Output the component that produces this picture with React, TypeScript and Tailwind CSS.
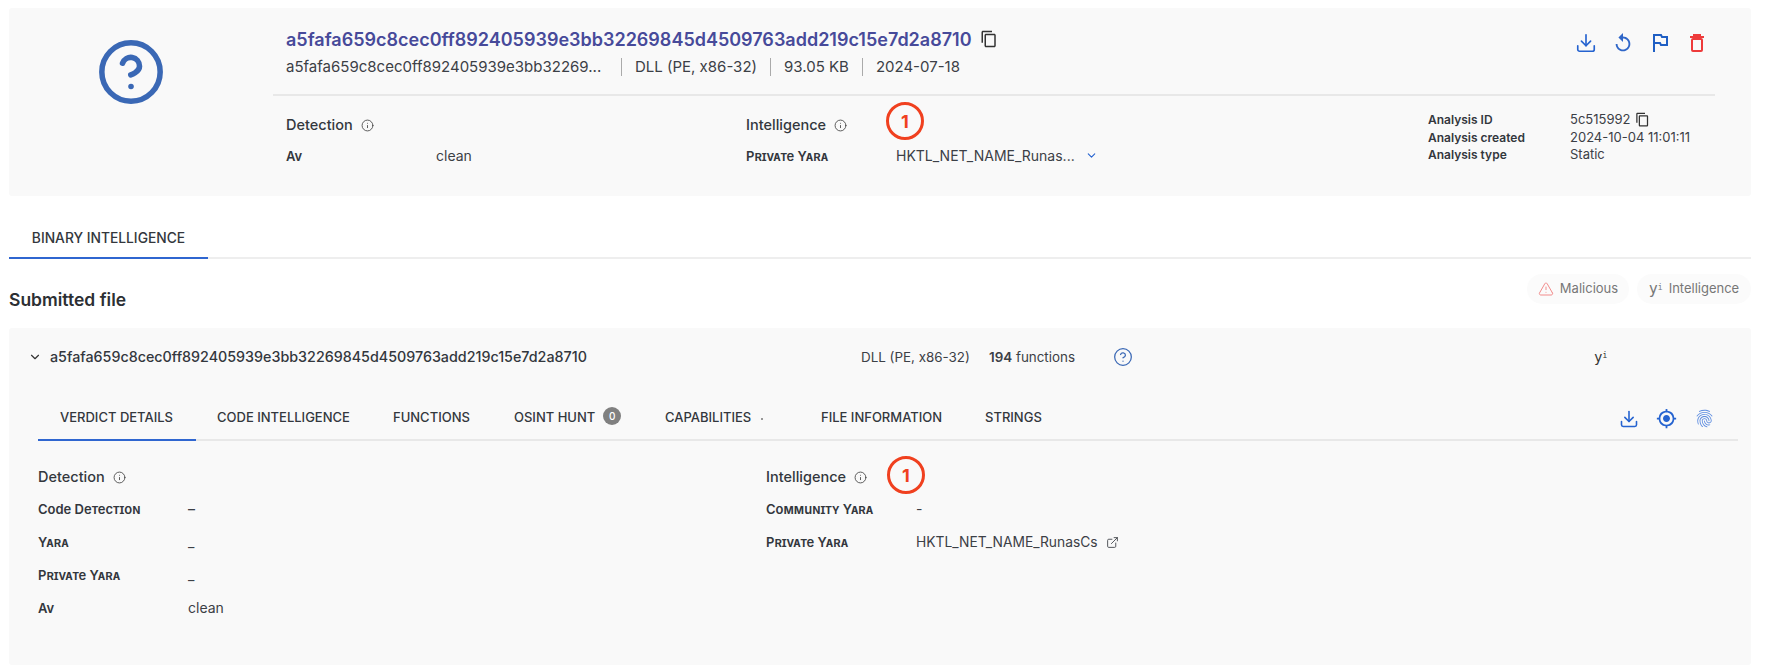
import { ChevronDown, CircleHelp, Download, ExternalLink, Info, TriangleAlert } from 'lucide-react';
import { MdFingerprint, MdGpsFixed, MdOutlineContentCopy, MdReplay } from 'react-icons/md';

const HASH = 'a5fafa659c8cec0ff892405939e3bb32269845d4509763add219c15e7d2a8710';

const TABS = [
  { label: 'VERDICT DETAILS', width: 'w-[158px]', active: true },
  { label: 'CODE INTELLIGENCE', width: 'w-[176px]' },
  { label: 'FUNCTIONS', width: 'w-[121px]' },
  { label: 'OSINT HUNT', width: 'w-[151px]', badge: '0' },
  { label: 'CAPABILITIES', width: 'w-[156px]', dot: true },
  { label: 'FILE INFORMATION', width: 'w-[164px]' },
  { label: 'STRINGS', width: 'w-[100px]' },
];

function Annotation() {
  return (
    <div className="absolute top-[-24px] flex h-[38px] w-[38px] items-center justify-center rounded-full border-[3px] border-[#f0401f] bg-transparent text-[18px] font-bold text-[#f0401f]">
      1
    </div>
  );
}

function Heading({ title, annotated, annotationClass }: { title: string; annotated?: boolean; annotationClass?: string }) {
  return (
    <div className="relative flex h-[20px] items-center gap-[8px] text-[14.5px] font-medium text-[#33373d]">
      {title}
      <Info size={13} strokeWidth={1.6} className="text-[#444]" />
      {annotated && <div className={annotationClass}><Annotation /></div>}
    </div>
  );
}

function Label({ children, className }: { children: string; className: string }) {
  return (
    <div className={`text-[13px] leading-[16px] font-semibold text-[#33373d] [font-variant-caps:small-caps] ${className}`}>
      {children}
    </div>
  );
}

function FlagIcon() {
  return (
    <svg width="22" height="22" viewBox="0 0 22 22" fill="none" stroke="#1f5fc4" strokeWidth="2">
      <path d="M5 20V3h7l1 2h5v8h-6l-1-2H5" />
    </svg>
  );
}

function TrashIcon() {
  return (
    <svg width="22" height="22" viewBox="0 0 22 22" fill="none" stroke="#ee3b3b" strokeWidth="2">
      <path d="M4 5h14M8 4.500V3h6v1.500" />
      <rect x="6" y="7" width="10" height="12" rx="1" />
    </svg>
  );
}

function YiMark({ className }: { className: string }) {
  return (
    <span className={`font-['DejaVu_Sans_Mono',monospace] leading-none ${className}`}>
      y<sup className="text-[8px]">i</sup>
    </span>
  );
}

export default function App() {
  return (
    <div className="h-[672px] w-[1768px] overflow-hidden bg-white pt-[8px] pr-[17px] pl-[9px] font-['Inter',sans-serif] text-[#33373d]">
      {/* file summary */}
      <div className="flex h-[188px] rounded-[3px] bg-[#f9f9f9]">
        <div className="flex h-[128px] w-[244px] shrink-0 items-center justify-center">
          <CircleHelp size={70} strokeWidth={1.9} className="text-[#3a68b5]" />
        </div>
        <div className="mr-[36px] ml-[20px] flex-1">
          <div className="flex h-[88px] justify-between border-b-[2px] border-[#e8e8e8] pl-[13px]">
            <div className="pt-[20px]">
              <div className="flex h-[22px] items-center gap-[8px]">
                <span className="text-[18px] font-semibold whitespace-nowrap text-[#474a9a]">{HASH}</span>
                <MdOutlineContentCopy size={18} className="text-[#333]" />
              </div>
              <div className="mt-[7px] flex h-[20px] items-center text-[15px] text-[#3c4046]">
                <span className="w-[335px] whitespace-nowrap">a5fafa659c8cec0ff892405939e3bb32269...</span>
                <span className="mr-[13px] h-[18px] w-px bg-[#aaa]" />
                <span>DLL (PE, x86-32)</span>
                <span className="mx-[13px] h-[18px] w-px bg-[#aaa]" />
                <span>93.05 KB</span>
                <span className="mx-[13px] h-[18px] w-px bg-[#aaa]" />
                <span>2024-07-18</span>
              </div>
            </div>
            <div className="mt-[24px] mr-[7px] flex h-[22px] items-start gap-[15px] text-[#2563d0]">
              <Download size={22} strokeWidth={1.8} />
              <MdReplay size={22} className="text-[#2f66c8]" />
              <FlagIcon />
              <TrashIcon />
            </div>
          </div>
          <div className="flex pl-[13px]">
            <div className="w-[460px] pt-[19px]">
              <Heading title="Detection" />
              <div className="mt-[10px] flex items-center">
                <Label className="w-[150px]">Av</Label>
                <span className="text-[14px] text-[#3c4046]">clean</span>
              </div>
            </div>
            <div className="w-[682px] pt-[19px]">
              <Heading title="Intelligence" annotated annotationClass="absolute top-[11px] left-[140px]" />
              <div className="mt-[10px] flex items-center">
                <Label className="w-[150px]">Private Yara</Label>
                <span className="text-[14px] text-[#3c4046]">HKTL_NET_NAME_Runas...</span>
                <ChevronDown size={13} strokeWidth={2} className="ml-[10px] text-[#2563d0]" />
              </div>
            </div>
            <div className="grid h-fit grid-cols-[142px_1fr] pt-[15px] text-[13px] leading-[17.500px]">
              <span className="text-[12px] font-semibold">Analysis ID</span>
              <span className="flex items-center gap-[5px] text-[#3c4046]">
                5c515992
                <MdOutlineContentCopy size={15} className="text-[#333]" />
              </span>
              <span className="text-[12px] font-semibold">Analysis created</span>
              <span className="whitespace-nowrap text-[#3c4046]">2024-10-04 11:01:11</span>
              <span className="text-[12px] font-semibold">Analysis type</span>
              <span className="text-[#3c4046]">Static</span>
            </div>
          </div>
        </div>
      </div>

      {/* page tabs */}
      <div className="mt-[30px] flex h-[33px] border-b-[2px] border-[#eeeeee]">
        <div className="-mb-[2px] flex h-[33px] w-[199px] justify-center border-b-[2px] border-[#2f66d0] pt-[2px] text-[13.800px] font-medium">
          BINARY INTELLIGENCE
        </div>
      </div>

      {/* section heading */}
      <div className="flex h-[69px] justify-between">
        <h2 className="mt-[31px] text-[17.500px] leading-[20px] font-semibold text-[#2c2f33]">Submitted file</h2>
        <div className="mt-[15px] flex h-[30px] gap-[8px] text-[13px] text-[#777]">
          <div className="flex w-[102px] items-center justify-center gap-[6px] rounded-full bg-[#fbfbfb]">
            <TriangleAlert size={16} strokeWidth={1.5} className="text-[#f28b8b]" />
            Malicious
          </div>
          <div className="flex w-[114px] items-center justify-center gap-[6px] rounded-full bg-[#fbfbfb]">
            <YiMark className="text-[15px] text-[#777]" />
            Intelligence
          </div>
        </div>
      </div>

      {/* file card */}
      <div className="h-[337px] rounded-[3px] bg-[#f9f9f9] pr-[13px] pl-[29px]">
        <div className="flex h-[58px] items-center text-[13.400px]">
          <ChevronDown size={14} strokeWidth={2} className="-ml-[10px] text-[#333]" />
          <span className="ml-[8px] w-[811px] text-[14.300px] font-medium whitespace-nowrap">{HASH}</span>
          <span className="w-[128px] text-[#3c4046]">DLL (PE, x86-32)</span>
          <span className="w-[124px] text-[#3c4046]">
            <b className="font-semibold">194</b> functions
          </span>
          <CircleHelp size={20} strokeWidth={1.5} className="text-[#3a68b5]" />
          <YiMark className="ml-[461px] text-[14px] text-[#333]" />
        </div>
        <div className="mt-[12px] flex h-[43px] items-start justify-between border-b-[2px] border-[#e8e8e8]">
          <div className="flex">
            {TABS.map(tab => (
              <div
                key={tab.label}
                className={`-mb-[2px] flex h-[43px] items-start pt-[10px] text-[13px] font-medium whitespace-nowrap ${tab.width} ${tab.active ? 'border-b-[2px] border-[#2f66d0] pl-[22px]' : 'pl-[21px]'}`}
              >
                {tab.label}
                {tab.badge && (
                  <span className="mt-[-1px] ml-[8px] flex h-[18px] w-[18px] items-center justify-center rounded-full bg-[#808080] text-[10px] text-white">
                    {tab.badge}
                  </span>
                )}
                {tab.dot && <span className="mt-[10px] ml-[10px] h-[2px] w-[2px] rounded-full bg-[#777]" />}
              </div>
            ))}
          </div>
          <div className="flex items-center gap-[17px] pt-[10px] pr-[23px] text-[#2563d0]">
            <Download size={20} strokeWidth={1.9} />
            <MdGpsFixed size={21} />
            <MdFingerprint size={21} className="text-[#5d8ce0]" />
          </div>
        </div>
        <div className="flex">
          <div className="w-[728px] pt-[26px]">
            <Heading title="Detection" />
            <div className="mt-[14px] grid grid-cols-[150px_1fr] gap-y-[17px] text-[14px] text-[#3c4046]">
              <Label className="self-center">Code Detection</Label>
              <span className="leading-[16px] font-medium">–</span>
              <Label className="self-center">Yara</Label>
              <span className="leading-[16px]">_</span>
              <Label className="self-center">Private Yara</Label>
              <span className="leading-[16px]">_</span>
              <Label className="self-center">Av</Label>
              <span className="leading-[16px]">clean</span>
            </div>
          </div>
          <div className="pt-[26px]">
            <Heading title="Intelligence" annotated annotationClass="absolute top-[13px] left-[121px]" />
            <div className="mt-[14px] grid grid-cols-[150px_1fr] gap-y-[17px] text-[14px] text-[#3c4046]">
              <Label className="self-center">Community Yara</Label>
              <span className="leading-[16px]">-</span>
              <Label className="self-center">Private Yara</Label>
              <span className="flex items-center gap-[8px] text-[13.800px] leading-[16px]">
                HKTL_NET_NAME_RunasCs
                <ExternalLink size={13} strokeWidth={1.6} />
              </span>
            </div>
          </div>
        </div>
      </div>
    </div>
  );
}
